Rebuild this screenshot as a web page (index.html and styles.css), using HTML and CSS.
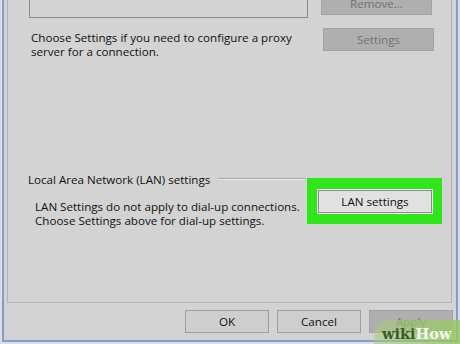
FILE: index.html
```html
<!DOCTYPE html>
<html>
<head>
<meta charset="utf-8">
<link rel="stylesheet" href="styles.css">
</head>
<body>
<div class="screen">
  <div class="window">
    <div class="panel">
      <div class="row top-row">
        <div class="listbox"></div>
        <div class="btn-col">
          <div class="btn disabled">Remove...</div>
        </div>
      </div>
      <div class="row proxy-row">
        <p class="text proxy-text">Choose Settings if you need to configure a proxy<br>server for a connection.</p>
        <div class="btn disabled settings-btn">Settings</div>
      </div>
      <div class="group">
        <div class="group-head">
          <span class="group-title">Local Area Network (LAN) settings</span>
          <span class="group-line"></span>
        </div>
        <div class="group-body">
          <p class="text lan-text">LAN Settings do not apply to dial-up connections.<br>Choose Settings above for dial-up settings.</p>
          <div class="highlight">
            <div class="btn lan-btn">LAN settings</div>
          </div>
        </div>
      </div>
    </div>
    <div class="footer">
      <div class="btn fbtn">OK</div>
      <div class="btn fbtn">Cancel</div>
      <div class="btn fbtn disabled">Apply</div>
    </div>
  </div>
  <div class="watermark"><span class="wiki">wiki</span><span class="how">How</span></div>
</div>
</body>
</html>
```
FILE: styles.css
```css
* { box-sizing: border-box; }
html, body { margin: 0; padding: 0; }
body {
  background: #dedede;
  font-family: "Open Sans", "Noto Sans", sans-serif;
  font-size: 11.6px;
  color: #111111;
  overflow: hidden;
}
.screen {
  position: relative;
  width: 460px;
  height: 344px;
  overflow: hidden;
  background: #dedede;
}
.window {
  margin-left: 2px;
  width: 456px;
  height: 342px;
  background: #d3d3d3;
  border-left: 2px solid #7f9fce;
  border-right: 2px solid #7f9fce;
  border-bottom: 2px solid #7f9fce;
  display: flex;
  flex-direction: column;
  overflow: hidden;
}
.panel {
  margin-top: -80px;
  margin-left: 3px;
  width: 445px;
  height: 383px;
  border: 1px solid #b3b3b3;
  padding-left: 21px;
  display: flex;
  flex-direction: column;
}
.row { display: flex; }
.top-row {
  margin-top: 20px;
  height: 77px;
}
.listbox {
  width: 279px;
  height: 77px;
  border: 1px solid #8c8c8c;
  background: #d3d3d3;
}
.btn-col {
  margin-left: 13px;
  display: flex;
  flex-direction: column;
  margin-top: 51px;
}
.btn {
  width: 111px;
  height: 23px;
  display: flex;
  align-items: center;
  justify-content: center;
  border: 1px solid #9f9f9f;
  background: #cecece;
  color: #111111;
  padding-bottom: 1px;
  white-space: nowrap;
}
.btn.disabled {
  background: #afafaf;
  border-color: #a4a4a4;
  color: #727272;
}
.proxy-row {
  margin-top: 10px;
}
.text {
  margin: 0;
  line-height: 14px;
  white-space: nowrap;
}
.proxy-text {
  width: 292px;
  margin-top: 3px;
  margin-left: 2px;
}
.group {
  margin-top: 113px;
  margin-left: -1px;
}
.group-head {
  display: flex;
  align-items: center;
  height: 14px;
}
.group-title { white-space: nowrap; }
.group-line {
  flex: 0 0 88px;
  margin-left: 8px;
  height: 2px;
  border-top: 1px solid #a9a9a9;
  border-bottom: 1px solid #eaeaea;
}
.group-body {
  display: flex;
  align-items: flex-start;
}
.lan-text {
  width: 272px;
  margin-left: 7px;
  margin-top: 14px;
}
.highlight {
  margin-top: -8px;
  background: #2fe61a;
  padding: 12px 10px 11px 11px;
}
.lan-btn {
  width: 114px;
  height: 23px;
  background: #e1e1e1;
  border: 1px solid #8e8e8e;
  box-shadow: 0 0 0 1px #f4f4f4;
}
.footer {
  display: flex;
  gap: 8px;
  padding-left: 181px;
  margin-top: 7px;
}
.fbtn {
  width: 84px;
}
.watermark {
  position: absolute;
  right: 0;
  bottom: 0;
  width: 86px;
  height: 24px;
  border-top-left-radius: 16px;
  background: linear-gradient(90deg, rgba(168,205,120,0.5), rgba(150,200,100,0.85));
  font-family: "DejaVu Serif", serif;
  font-weight: bold;
  font-size: 14.5px;
  line-height: 16px;
  padding: 6px 0 0 8px;
}
.wiki { color: #3a5a2a; }
.how { color: #f4f7ef; }
```
